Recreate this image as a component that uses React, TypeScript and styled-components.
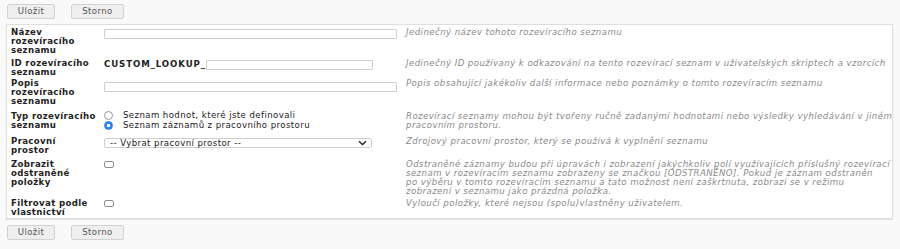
import React from 'react'
import styled, { createGlobalStyle } from 'styled-components'

const GlobalStyle = createGlobalStyle`
  html, body {
    margin: 0;
    padding: 0;
    background: #f9f9f9;
  }
  body {
    font-family: "DejaVu Sans", Verdana, sans-serif;
    font-size: 8.6px;
    letter-spacing: 0.4px;
    color: #222;
  }
`

type RowData = {
  label: string[]
  desc: string[]
  top: number
  field: React.ReactNode
}

export default function App() {
  const rows: RowData[] = [
    {
      label: ['Název', 'rozevíracího', 'seznamu'],
      desc: ['Jedinečný název tohoto rozevíracího seznamu'],
      top: 3,
      field: <TextInput $width={293} $top={0.5} />,
    },
    {
      label: ['ID rozevíracího', 'seznamu'],
      desc: ['Jedinečný ID používaný k odkazování na tento rozevírací seznam v uživatelských skriptech a vzorcích'],
      top: 4,
      field: (
        <IdField>
          <Prefix>CUSTOM_LOOKUP_</Prefix>
          <TextInput $width={167} $top={0} />
        </IdField>
      ),
    },
    {
      label: ['Popis', 'rozevíracího', 'seznamu'],
      desc: ['Popis obsahující jakékoliv další informace nebo poznámky o tomto rozevíracím seznamu'],
      top: 2,
      field: <TextInput $width={293} $top={2.5} />,
    },
    {
      label: ['Typ rozevíracího', 'seznamu'],
      desc: [
        'Rozevírací seznamy mohou být tvořeny ručně zadanými hodnotami nebo výsledky vyhledávání v jiném',
        'pracovním prostoru.',
      ],
      top: 5.7,
      field: (
        <RadioList>
          <RadioOption>
            <Radio />
            <span>Seznam hodnot, které jste definovali</span>
          </RadioOption>
          <RadioOption>
            <Radio $checked />
            <span>Seznam záznamů z pracovního prostoru</span>
          </RadioOption>
        </RadioList>
      ),
    },
    {
      label: ['Pracovní', 'prostor'],
      desc: ['Zdrojový pracovní prostor, který se používá k vyplnění seznamu'],
      top: 7.7,
      field: (
        <Select>
          <span>-- Vybrat pracovní prostor --</span>
          <svg width="9" height="6" viewBox="0 0 9 6">
            <path d="M1 1.2 L4.5 4.5 L8 1.2" fill="none" stroke="#222" strokeWidth="1.4" />
          </svg>
        </Select>
      ),
    },
    {
      label: ['Zobrazit', 'odstraněné', 'položky'],
      desc: [
        'Odstraněné záznamy budou při úpravách i zobrazení jakýchkoliv polí využívajících příslušný rozevírací',
        'seznam v rozevíracím seznamu zobrazeny se značkou [ODSTRANĚNO]. Pokud je záznam odstraněn',
        'po výběru v tomto rozevíracím seznamu a tato možnost není zaškrtnuta, zobrazí se v režimu',
        'zobrazení v seznamu jako prázdná položka.',
      ],
      top: 4.6,
      field: <Checkbox />,
    },
    {
      label: ['Filtrovat podle', 'vlastnictví'],
      desc: ['Vyloučí položky, které nejsou (spolu)vlastněny uživatelem.'],
      top: 3,
      field: <Checkbox />,
    },
  ]

  return (
    <Page>
      <GlobalStyle />
      <Toolbar>
        <Button $width={48}>Uložit</Button>
        <Button $width={53}>Storno</Button>
      </Toolbar>
      <Panel>
        {rows.map((row, i) => (
          <Row key={i} $top={row.top}>
            <Label>
              {row.label.map((l, j) => (
                <div key={j}>{l}</div>
              ))}
            </Label>
            <Field>{row.field}</Field>
            <Description>
              {row.desc.map((d, j) => (
                <div key={j}>{d}</div>
              ))}
            </Description>
          </Row>
        ))}
      </Panel>
      <Toolbar>
        <Button $width={48}>Uložit</Button>
        <Button $width={53}>Storno</Button>
      </Toolbar>
    </Page>
  )
}

const Page = styled.div`
  width: 900px;
  height: 249px;
  padding: 4px 0 0 6px;
  box-sizing: border-box;
`

const Toolbar = styled.div`
  display: flex;
  gap: 16px;
  margin-left: 1px;
  height: 15px;
`

const Button = styled.button<{ $width: number }>`
  font-family: "DejaVu Sans", Verdana, sans-serif;
  font-size: 8.6px;
  letter-spacing: 0.4px;
  color: #555;
  background: #efefef;
  border: 1px solid #d2d2d2;
  border-radius: 2px;
  padding: 0;
  width: ${(p) => p.$width}px;
  height: 15px;
  line-height: 13px;
`

const Panel = styled.div`
  width: 887px;
  height: 195px;
  box-sizing: border-box;
  margin: 5px 0 6px;
  background: #fff;
  border: 1px solid #dedede;
  box-shadow: 0 1px 1px rgba(0, 0, 0, 0.08);
  padding: 0 4px;
`

const Row = styled.div<{ $top: number }>`
  display: grid;
  grid-template-columns: 93px 302px 1fr;
  align-items: start;
  padding-top: ${(p) => p.$top}px;
  line-height: 9px;
`

const Label = styled.div`
  font-weight: bold;
  color: #222;
  white-space: nowrap;
  letter-spacing: 0.34px;
`

const Field = styled.div`
  display: flex;
  align-items: flex-start;
`

const Description = styled.div`
  font-style: italic;
  color: #8a8a8a;
  white-space: nowrap;
  letter-spacing: 0.43px;
`

const TextInput = styled.div<{ $width: number; $top: number }>`
  width: ${(p) => p.$width}px;
  height: 10px;
  box-sizing: border-box;
  border: 1px solid #cfcfcf;
  border-radius: 1px;
  background: #fff;
  margin-top: ${(p) => p.$top}px;
`

const IdField = styled.div`
  display: flex;
  align-items: center;
  margin-top: 0.5px;
`

const Prefix = styled.span`
  font-weight: bold;
  letter-spacing: 0.9px;
`

const RadioList = styled.div`
  display: flex;
  flex-direction: column;
  margin-top: -0.5px;
`

const RadioOption = styled.div`
  display: flex;
  align-items: center;
  gap: 10px;
  height: 9.3px;
`

const Radio = styled.span<{ $checked?: boolean }>`
  width: 9px;
  height: 9px;
  box-sizing: border-box;
  border-radius: 50%;
  border: 1px solid ${(p) => (p.$checked ? '#2a7de1' : '#9a9a9a')};
  background: ${(p) => (p.$checked ? 'radial-gradient(circle, #fff 0 1.6px, #2f86ef 1.8px)' : '#fff')};
`

const Select = styled.div`
  width: 268px;
  height: 10px;
  box-sizing: border-box;
  border: 1px solid #cfcfcf;
  border-radius: 2px;
  background: #fff;
  display: flex;
  align-items: center;
  justify-content: space-between;
  padding: 0 4px 0 5px;
  line-height: 8px;
  margin-top: 1px;
`

const Checkbox = styled.span`
  width: 10px;
  height: 7px;
  box-sizing: border-box;
  border: 1px solid #8e8e8e;
  border-radius: 2px;
  background: #fff;
  margin-top: 1px;
`
